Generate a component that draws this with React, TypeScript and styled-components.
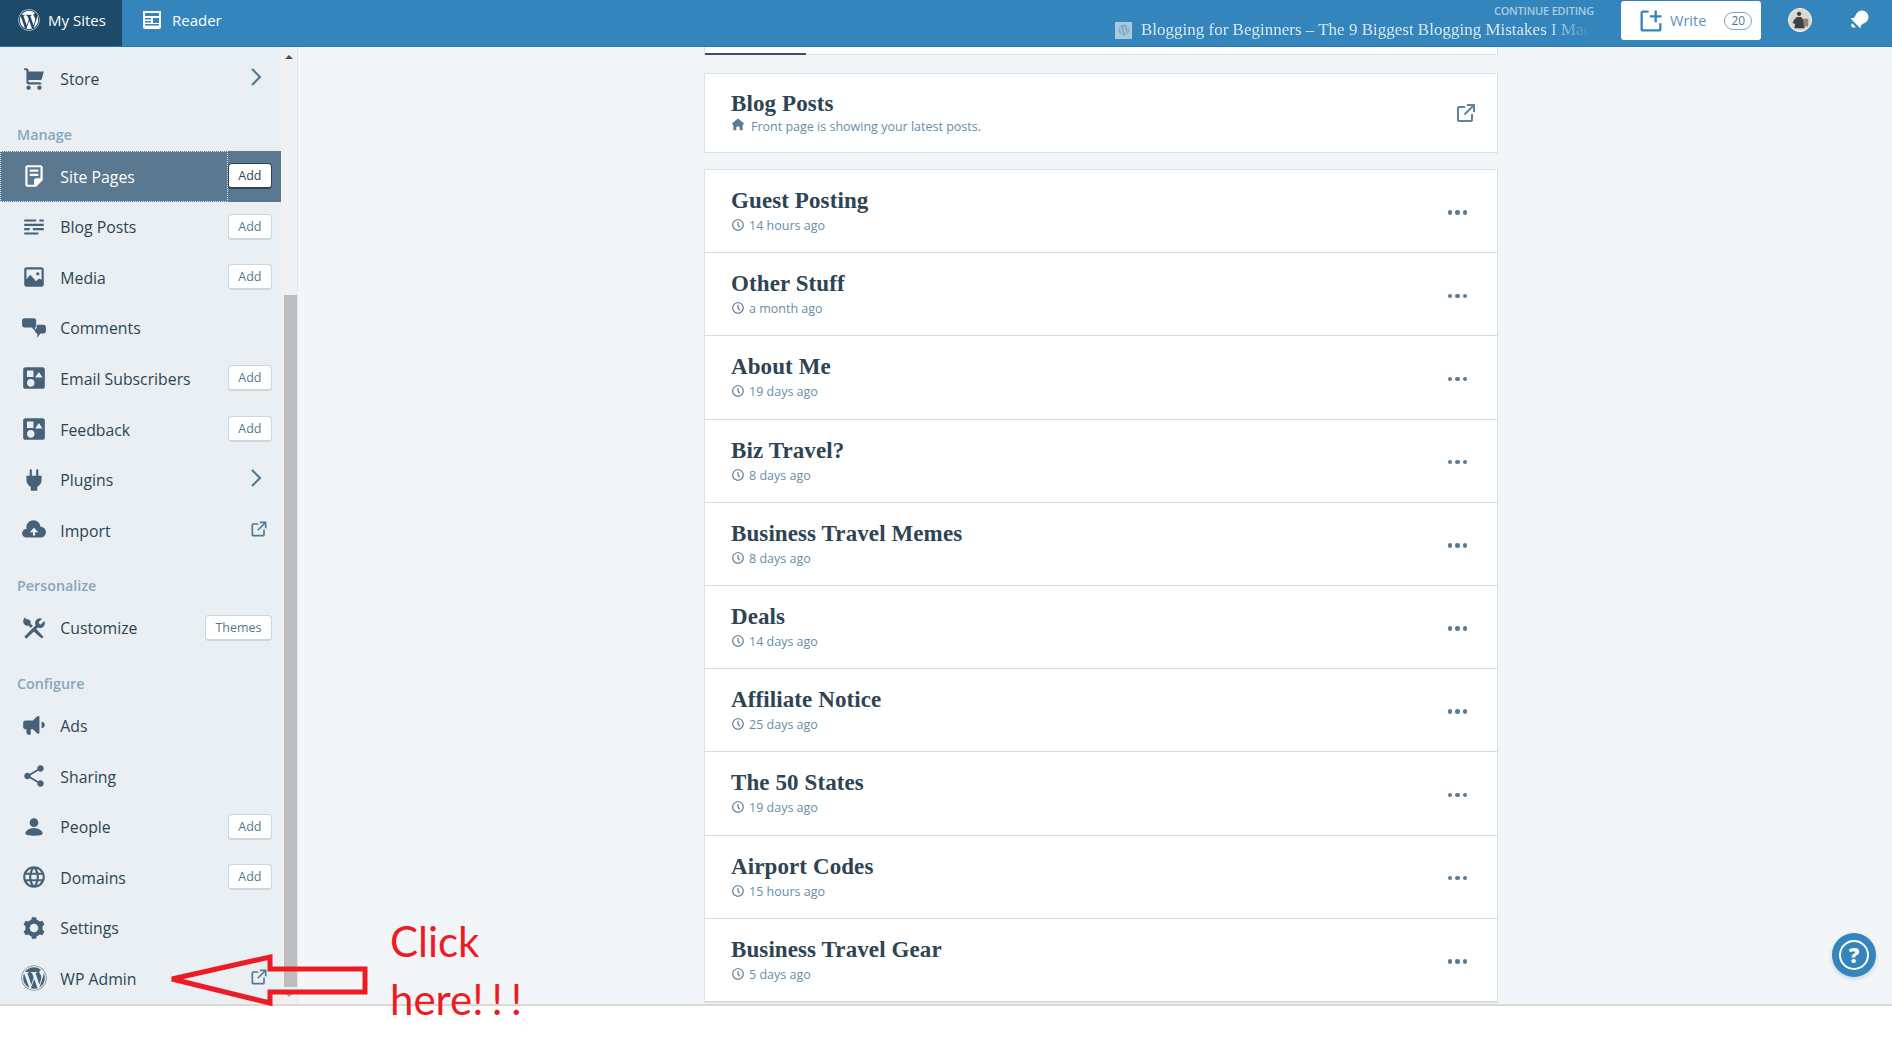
import React from "react";
import styled, { createGlobalStyle } from "styled-components";
import { FaWordpress } from "react-icons/fa";
import { MdLanguage } from "react-icons/md";

const GlobalStyle = createGlobalStyle`
    html, body {
        margin: 0;
        padding: 0;
        background: #fff;
    }
    body {
        width: 1892px;
        height: 1058px;
        overflow: hidden;
        font-family: "Open Sans", "Noto Sans", sans-serif;
    }
`;

const palette = {
    blue: "#3385bb",
    navy: "#1d4a68",
    ink: "#2e4453",
    steel: "#537994",
    muted: "#87a6bc",
    line: "#d8e2e9",
};

const ICONS: Record<string, string> = {
    cart: "M9 20c0 1.1-.9 2-2 2s-1.99-.9-1.99-2S5.9 18 7 18s2 .9 2 2zm8-2c-1.1 0-1.99.9-1.99 2s.89 2 1.99 2 2-.9 2-2-.9-2-2-2zm.396-5c.937 0 1.75-.65 1.952-1.566L21 5H7V4c0-1.105-.895-2-2-2H3v2h2v11c0 1.105.895 2 2 2h12c0-1.105-.895-2-2-2H7v-2h10.396z",
    pages: "M16 8H8V6h8v2zm0 2H8v2h8v-2zm4-6v12l-6 6H6c-1.105 0-2-.895-2-2V4c0-1.105.895-2 2-2h12c1.105 0 2 .895 2 2zm-2 10V4H6v16h6v-4c0-1.105.895-2 2-2h4z",
    posts: "M16 19H3v-2h13v2zm5-10H3v2h18V9zM3 5v2h11V5H3zm14 0v2h4V5h-4zm-6 8v2h10v-2H11zm-8 0v2h5v-2H3z",
    media: "M21 5v14c0 1.105-.895 2-2 2H5c-1.105 0-2-.895-2-2V5c0-1.105.895-2 2-2h14c1.105 0 2 .895 2 2zm-2 0H5v9l3.500-4 5.500 6 1.500-1.700c.8-.9 2.200-.9 3 0l.5.600V5zm-5 4c0-.83.67-1.500 1.500-1.500S17 8.170 17 9s-.67 1.500-1.500 1.500S14 9.830 14 9z",
    comments: "M3 3h9c1.100 0 2 .9 2 2v5c0 .8-.4 1.300-1 1.700V15l-3-3.500H3c-1.100 0-2-.9-2-2V5c0-1.100.9-2 2-2zm13 6h5c1.100 0 2 .9 2 2v4c0 1.100-.9 2-2 2h-3l-3 4v-4c-1.100 0-2-.900-2-2v-1.500c.9-.5 1.500-1.500 1.500-2.500V10c0-.6.6-1 1.500-1z",
    types: "M4 2h16c1.100 0 2 .9 2 2v16c0 1.100-.9 2-2 2H4c-1.100 0-2-.9-2-2V4c0-1.100.9-2 2-2zm1.500 3v6h6V5h-6zm11 1.500L13 11.500h7L16.500 6.500zM9 13c-1.930 0-3.500 1.570-3.500 3.500S7.070 20 9 20s3.500-1.570 3.500-3.500S10.930 13 9 13z",
    plugins: "M16 8V3c0-.552-.448-1-1-1s-1 .448-1 1v5h-4V3c0-.552-.448-1-1-1s-1 .448-1 1v5H5v4c0 2.79 1.637 5.193 4 6.317V22h6v-3.683c2.363-1.124 4-3.527 4-6.317V8h-3z",
    cloud: "M18 9c-.01 0-.017.002-.025.003C17.72 5.646 14.922 3 11.500 3 7.910 3 5 5.910 5 9.500c0 .524.070 1.030.186 1.520C5.123 11.015 5.064 11 5 11c-2.210 0-4 1.790-4 4 0 2.210 1.790 4 4 4h13c2.760 0 5-2.240 5-5s-2.240-5-5-5zm-5 5v3h-2v-3H8l4-4 4 4h-3z",
    customize: "M2 6c0-1.505.78-3.08 2-4 0 .845.69 2 2 2 1.657 0 3 1.343 3 3 0 .386-.08.752-.212 1.09.74.594 1.476 1.19 2.19 1.81L8.9 11.98c-.62-.716-1.214-1.454-1.807-2.192C6.753 9.92 6.387 10 6 10c-2.21 0-4-1.79-4-4zm12.152 6.848l1.34-1.34c.607.304 1.283.492 2.008.492 2.485 0 4.5-2.015 4.5-4.5 0-.725-.188-1.4-.493-2.007L18 9l-2-2 3.507-3.507C18.9 3.188 18.225 3 17.5 3 15.015 3 13 5.015 13 7.5c0 .725.188 1.4.493 2.007L3 20l2 2 6.848-6.848c1.885 1.928 3.874 3.753 5.977 5.45l1.425 1.148 1.5-1.5-1.15-1.425c-1.695-2.103-3.52-4.092-5.448-5.977z",
    speaker: "M19 8v6c1.7 0 3-1.3 3-3s-1.3-3-3-3zM11 7H4c-1.1 0-2 .9-2 2v4c0 1.1.9 2 2 2h1v3c0 1.1.9 2 2 2h2v-5h2l4 4h2V3h-2l-4 4z",
    share: "M18 16c-.788 0-1.5.31-2.034.807L8.91 12.7c.05-.23.09-.46.09-.7s-.04-.47-.09-.7l7.05-4.11c.54.5 1.25.81 2.04.81 1.66 0 3-1.34 3-3s-1.34-3-3-3-3 1.34-3 3c0 .24.04.47.09.7L8.04 9.81C7.5 9.31 6.79 9 6 9c-1.66 0-3 1.34-3 3s1.34 3 3 3c.79 0 1.5-.31 2.04-.81l7.05 4.12c-.05.22-.09.45-.09.69 0 1.66 1.34 3 3 3s3-1.34 3-3-1.34-3-3-3z",
    user: "M12 4c2.21 0 4 1.79 4 4s-1.79 4-4 4-4-1.79-4-4 1.79-4 4-4zm0 16s8 0 8-2c0-2.4-3.9-5-8-5s-8 2.6-8 5c0 2 8 2 8 2z",
    cog: "M20 12c0-.568-.06-1.122-.174-1.656l1.834-1.612-2-3.464-2.322.786c-.82-.736-1.787-1.308-2.86-1.657L14 2h-4l-.48 2.396c-1.07.35-2.04.92-2.858 1.657L4.34 5.268l-2 3.464 1.834 1.612C4.06 10.878 4 11.432 4 12s.06 1.122.174 1.656L2.34 15.268l2 3.464 2.322-.786c.82.736 1.787 1.308 2.86 1.657L10 22h4l.48-2.396c1.07-.35 2.04-.92 2.858-1.657l2.322.786 2-3.464-1.834-1.613c.113-.535.174-1.09.174-1.657zm-8 4c-2.21 0-4-1.79-4-4s1.79-4 4-4 4 1.79 4 4-1.79 4-4 4z",
    external: "M19 13v6c0 1.105-.895 2-2 2H5c-1.105 0-2-.895-2-2V7c0-1.105.895-2 2-2h6v2H5v12h12v-6h2zM13 3v2h4.586l-7.793 7.793 1.414 1.414L19 6.414V11h2V3h-8z",
    chevron: "M10 20l8-8-8-8-1.414 1.414L15.172 12l-6.586 6.586",
    house: "M22 9L12 1 2 9v2h2v10h5v-4c0-1.657 1.343-3 3-3s3 1.343 3 3v4h5V11h2V9z",
    time: "M12 4c4.41 0 8 3.59 8 8s-3.59 8-8 8-8-3.59-8-8 3.59-8 8-8m0-2C6.477 2 2 6.477 2 12s4.477 10 10 10 10-4.477 10-10S17.523 2 12 2zm3.8 13.4L13 11.667V7h-2v5.333l3.2 4.266 1.6-1.2z",
    reader: "M3 3h18v16c0 1.105-.895 2-2 2H5c-1.105 0-2-.895-2-2V3zm2 2v3h14V5H5zm0 5v1.500h6V10H5zm8 0v5h6v-5h-6zm-8 3v1.500h6V13H5zm0 3v1.500h14V16H5z",
    create: "M21 14v5c0 1.105-.895 2-2 2H5c-1.105 0-2-.895-2-2V5c0-1.105.895-2 2-2h5v2H5v14h14v-5h2zM21 7h-4V3h-2v4h-4v2h4v4h2V9h4V7z",
    bell: "M3.500 10.500C6.500 10.500 7.500 9.500 8.500 7.500 9.500 4.500 12 2.500 15 2.500c3.500 0 6.500 3 6.500 6.500 0 3-2 5.500-5 6.500-2 1-3 2-3 5L3.500 10.500zM5 15.200l3.800 3.800c-1 1-2.800 1-3.800 0s-1-2.800 0-3.800z",
};

const Glyph = styled.svg<{ $size: number; $color?: string }>`
    display: block;
    flex: none;
    width: ${(p) => p.$size}px;
    height: ${(p) => p.$size}px;
    fill: ${(p) => p.$color || "currentColor"};
`;

interface IconProps {
    name: string;
    size?: number;
    color?: string;
}

const Icon: React.FC<IconProps> = ({ name, size = 26, color }) => (
    <Glyph viewBox="0 0 24 24" $size={size} $color={color} fillRule="evenodd">
        <path d={ICONS[name]} />
    </Glyph>
);

const Page = styled.div`
    position: relative;
    width: 1892px;
    height: 1058px;
    overflow: hidden;
`;

const Frame = styled.div`
    height: 1004px;
    display: flex;
    flex-direction: column;
    border-bottom: 2px solid #dcd8d3;
`;

/* ---- masthead ---- */

const Masthead = styled.header`
    flex: none;
    height: 46px;
    display: flex;
    align-items: stretch;
    background: ${palette.blue};
    border-bottom: 1px solid #2f76a6;
    color: #fff;
`;

const MastTab = styled.div<{ $active?: boolean; $width: number }>`
    width: ${(p) => p.$width}px;
    display: flex;
    align-items: center;
    gap: 8px;
    padding: 0 0 6px 18px;
    box-sizing: border-box;
    font-size: 15px;
    background: ${(p) => (p.$active ? palette.navy : "transparent")};
`;

const DraftBlock = styled.div`
    margin-left: auto;
    width: 480px;
    height: 46px;
    display: flex;
    flex-direction: column;
    align-items: flex-end;
    box-sizing: border-box;
    padding-top: 4px;
`;

const DraftLabel = styled.div`
    font-size: 11px;
    line-height: 14px;
    letter-spacing: -0.2px;
    text-transform: uppercase;
    font-weight: 600;
    color: #a9cde4;
`;

const DraftTitle = styled.div`
    width: 476px;
    margin-right: 3px;
    display: flex;
    align-items: center;
    gap: 9px;
    line-height: 24px;
`;

const SiteThumb = styled.div`
    flex: none;
    width: 17px;
    height: 17px;
    background: #a9c9de;
    display: flex;
    align-items: center;
    justify-content: center;
    color: #7ea5c0;
`;

const DraftText = styled.div`
    flex: 1;
    min-width: 0;
    white-space: nowrap;
    overflow: hidden;
    font-family: "Liberation Serif", serif;
    font-size: 17px;
    color: #d7e7f2;
    -webkit-mask-image: linear-gradient(to right, #000 90%, transparent 100%);
    mask-image: linear-gradient(to right, #000 90%, transparent 100%);
`;

const WriteButton = styled.div`
    flex: none;
    align-self: flex-start;
    margin: 1px 0 0 27px;
    width: 140px;
    height: 39px;
    box-sizing: border-box;
    background: #fff;
    border-radius: 3px;
    display: flex;
    align-items: center;
    padding-left: 16px;
    color: ${palette.blue};
    font-size: 14.5px;
`;

const WriteLabel = styled.span`
    margin-left: 5px;
    color: #5a93bc;
`;

const Badge = styled.span`
    margin-left: 18px;
    width: 28px;
    height: 18px;
    box-sizing: border-box;
    border: 1px solid #87a6bc;
    border-radius: 9px;
    font-size: 12px;
    line-height: 16px;
    text-align: center;
    color: #537994;
`;

const MastIcons = styled.div`
    width: 131px;
    display: flex;
    align-items: center;
    padding-left: 27px;
    gap: 35px;
    box-sizing: border-box;
    height: 40px;
`;

const Avatar = styled.div`
    flex: none;
    width: 24px;
    height: 24px;
    box-sizing: border-box;
    border: 1.5px solid #fff;
    border-radius: 50%;
    overflow: hidden;
    background: #d8d4cd;
`;

/* ---- sidebar ---- */

const Body = styled.div`
    flex: 1;
    min-height: 0;
    display: flex;
    background: #f3f6f8;
`;

const Sidebar = styled.aside`
    flex: none;
    width: 281px;
    overflow: hidden;
    background: #e9eff3;
    padding-top: 6.3px;
    box-sizing: border-box;
`;

const SectionTitle = styled.h2`
    margin: 0;
    height: 47.2px;
    padding: 7px 0 0 17px;
    box-sizing: border-box;
    font-size: 14.3px;
    line-height: 47.2px;
    font-weight: 600;
    color: ${palette.muted};
`;

const Row = styled.div<{ $selected?: boolean }>`
    height: 50.55px;
    display: flex;
    align-items: center;
    padding-right: 9px;
    box-sizing: border-box;
    color: ${(p) => (p.$selected ? "#fff" : palette.ink)};
    background: ${(p) => (p.$selected ? "#5a7890" : "transparent")};
`;

const RowLink = styled.div<{ $selected?: boolean }>`
    flex: 1;
    min-width: 0;
    height: 100%;
    display: flex;
    align-items: center;
    gap: 13.3px;
    padding: 1px 0 0 21px;
    box-sizing: border-box;
    font-size: 15.8px;
    ${(p) => p.$selected && "outline: 1px dotted rgba(255,255,255,.8); outline-offset: -1px;"}
`;

const RowIcon = styled.span<{ $selected?: boolean }>`
    display: flex;
    margin-top: -1px;
    color: ${(p) => (p.$selected ? "#fff" : "#476178")};
`;

const SideAction = styled.div<{ $selected?: boolean }>`
    flex: none;
    height: 26px;
    padding: 0 9.5px;
    box-sizing: border-box;
    display: flex;
    align-items: center;
    background: #fff;
    border: 1px solid ${(p) => (p.$selected ? palette.ink : "#c8d7e1")};
    border-bottom-width: 2px;
    border-radius: 4px;
    font-size: 12.5px;
    color: ${(p) => (p.$selected ? palette.ink : palette.steel)};
`;

const RowTail = styled.span<{ $wide?: boolean }>`
    flex: none;
    display: flex;
    margin-top: -3px;
    margin-right: ${(p) => (p.$wide ? 4 : 3)}px;
    color: ${palette.steel};
`;

const Scrollbar = styled.div`
    flex: none;
    width: 17px;
    background: #f1f1f1;
    border-right: 1px solid #dfe7ec;
    box-sizing: border-box;
    display: flex;
    flex-direction: column;
    align-items: center;
`;

const ScrollUp = styled.div`
    margin-top: 8px;
    width: 0;
    height: 0;
    border-left: 4px solid transparent;
    border-right: 4px solid transparent;
    border-bottom: 4px solid #505050;
`;

const ScrollThumb = styled.div`
    margin: 236px 0 0 3px;
    width: 13px;
    height: 692px;
    background: #bdbdbd;
`;

const ScrollDown = styled.div`
    margin-top: 6px;
    width: 0;
    height: 0;
    border-left: 4px solid transparent;
    border-right: 4px solid transparent;
    border-top: 4px solid #a3a3a3;
`;

/* ---- content ---- */

const Main = styled.main`
    flex: 1;
    min-width: 0;
    overflow: hidden;
    padding: 0 394px 0 406px;
`;

const TabStrip = styled.div`
    height: 8px;
    padding-top: 6px;
    box-sizing: border-box;
    background: #fff;
    border: 1px solid ${palette.line};
    border-top: none;
    margin-bottom: 18px;
`;

const TabMark = styled.div`
    width: 101px;
    height: 2px;
    background: #3d4f60;
`;

const Card = styled.section`
    background: #fff;
    border: 1px solid ${palette.line};
    margin-bottom: 16px;
`;

const ListRow = styled.div<{ $tall?: boolean }>`
    height: ${(p) => (p.$tall ? 78 : 82.2)}px;
    display: flex;
    align-items: center;
    justify-content: space-between;
    padding: 0 21px 0 26px;
    border-bottom: ${(p) => (p.$tall ? "none" : `1px solid #cfdde8`)};
`;

const RowText = styled.div`
    display: flex;
    flex-direction: column;
    margin-top: 1px;
`;

const PageTitle = styled.div`
    font-family: "Liberation Serif", serif;
    font-weight: 700;
    font-size: 23px;
    line-height: 26px;
    letter-spacing: 0.1px;
    color: #2e4453;
`;

const Meta = styled.div<{ $gap: number; $top: number }>`
    display: flex;
    align-items: center;
    gap: ${(p) => p.$gap}px;
    margin-top: ${(p) => p.$top}px;
    font-size: 12.5px;
    line-height: 18px;
    color: #668eaa;
`;

const MetaIcon = styled.span<{ $up?: boolean }>`
    display: flex;
    color: #5b7a94;
    margin-top: ${(p) => (p.$up ? -4 : -2)}px;
`;

const Dots = styled.div`
    display: flex;
    gap: 3px;
    margin: 3px 9px 0 0;
`;

const Dot = styled.span`
    width: 4.5px;
    height: 4.5px;
    border-radius: 50%;
    background: #5b7a94;
`;

const OpenLink = styled.span`
    display: flex;
    color: #5f83a0;
    margin-right: -2px;
`;

/* ---- overlays ---- */

const HelpButton = styled.div`
    position: absolute;
    left: 1832px;
    top: 933px;
    width: 44px;
    height: 44px;
    box-sizing: border-box;
    border-radius: 50%;
    background: ${palette.blue};
    padding: 7px;
    box-shadow: 0 2px 4px rgba(135, 166, 188, 0.4);
`;

const HelpRing = styled.div`
    width: 100%;
    height: 100%;
    box-sizing: border-box;
    border-radius: 50%;
    border: 2.5px solid #fff;
    display: flex;
    align-items: center;
    justify-content: center;
    color: #fff;
    font-family: "Open Sans", sans-serif;
    font-weight: 800;
    font-size: 21px;
    line-height: 1;
`;

const Arrow = styled.svg`
    position: absolute;
    left: 165px;
    top: 948px;
    width: 210px;
    height: 64px;
`;

const ClickNote = styled.div`
    position: absolute;
    left: 390px;
    top: 912px;
    width: 160px;
    font-family: Lato, "Liberation Sans", sans-serif;
    font-size: 42px;
    line-height: 58px;
    color: #ed1c24;
`;

const Shout = styled.span`
    letter-spacing: 8px;
`;

const PAGES = [
    { title: "Guest Posting", when: "14 hours ago" },
    { title: "Other Stuff", when: "a month ago" },
    { title: "About Me", when: "19 days ago" },
    { title: "Biz Travel?", when: "8 days ago" },
    { title: "Business Travel Memes", when: "8 days ago" },
    { title: "Deals", when: "14 days ago" },
    { title: "Affiliate Notice", when: "25 days ago" },
    { title: "The 50 States", when: "19 days ago" },
    { title: "Airport Codes", when: "15 hours ago" },
    { title: "Business Travel Gear", when: "5 days ago" },
];

type Tail = "chevron" | "external";

interface SideRowProps {
    icon?: string;
    label: string;
    action?: string;
    tail?: Tail;
    selected?: boolean;
    customIcon?: React.ReactNode;
}

const SideRow: React.FC<SideRowProps> = ({ icon, label, action, tail, selected, customIcon }) => (
    <Row $selected={selected}>
        <RowLink $selected={selected}>
            <RowIcon $selected={selected}>{customIcon || <Icon name={icon!} />}</RowIcon>
            {label}
        </RowLink>
        {action && <SideAction $selected={selected}>{action}</SideAction>}
        {tail && (
            <RowTail $wide={tail === "chevron"}>
                <Icon name={tail} size={tail === "chevron" ? 26 : 20} />
            </RowTail>
        )}
    </Row>
);

const App: React.FC = () => {
    return (
        <Page>
            <GlobalStyle />
            <Frame>
                <Masthead>
                    <MastTab $active $width={122}>
                        <FaWordpress size={22} />
                        My Sites
                    </MastTab>
                    <MastTab $width={130}>
                        <Icon name="reader" size={24} />
                        Reader
                    </MastTab>
                    <DraftBlock>
                        <DraftLabel>Continue Editing</DraftLabel>
                        <DraftTitle>
                            <SiteThumb>
                                <FaWordpress size={12} />
                            </SiteThumb>
                            <DraftText>Blogging for Beginners – The 9 Biggest Blogging Mistakes I Made</DraftText>
                        </DraftTitle>
                    </DraftBlock>
                    <WriteButton>
                        <Icon name="create" size={28} color="#3385bb" />
                        <WriteLabel>Write</WriteLabel>
                        <Badge>20</Badge>
                    </WriteButton>
                    <MastIcons>
                        <Avatar>
                            <svg viewBox="0 0 24 24" width="21" height="21">
                                <rect width="24" height="24" fill="#dcd7cf" />
                                <path d="M9 5.500c0-1.400 1-2.500 2.500-2.500S14 4.100 14 5.500 13 8 11.500 8 9 6.900 9 5.500zM6 12l3-3h5l3 4 1 9H6l1-5-3-1 2-4z" fill="#3a4148" />
                                <path d="M16 11h6v9h-5z" fill="#8d8377" />
                            </svg>
                        </Avatar>
                        <Icon name="bell" size={24} color="#fff" />
                    </MastIcons>
                </Masthead>
                <Body>
                    <Sidebar>
                        <SideRow icon="cart" label="Store" tail="chevron" />
                        <SectionTitle>Manage</SectionTitle>
                        <SideRow icon="pages" label="Site Pages" action="Add" selected />
                        <SideRow icon="posts" label="Blog Posts" action="Add" />
                        <SideRow icon="media" label="Media" action="Add" />
                        <SideRow icon="comments" label="Comments" />
                        <SideRow icon="types" label="Email Subscribers" action="Add" />
                        <SideRow icon="types" label="Feedback" action="Add" />
                        <SideRow icon="plugins" label="Plugins" tail="chevron" />
                        <SideRow icon="cloud" label="Import" tail="external" />
                        <SectionTitle>Personalize</SectionTitle>
                        <SideRow icon="customize" label="Customize" action="Themes" />
                        <SectionTitle>Configure</SectionTitle>
                        <SideRow icon="speaker" label="Ads" />
                        <SideRow icon="share" label="Sharing" />
                        <SideRow icon="user" label="People" action="Add" />
                        <SideRow customIcon={<MdLanguage size={26} />} label="Domains" action="Add" />
                        <SideRow icon="cog" label="Settings" />
                        <SideRow customIcon={<FaWordpress size={26} />} label="WP Admin" tail="external" />
                    </Sidebar>
                    <Scrollbar>
                        <ScrollUp />
                        <ScrollThumb />
                        <ScrollDown />
                    </Scrollbar>
                    <Main>
                        <TabStrip>
                            <TabMark />
                        </TabStrip>
                        <Card>
                            <ListRow $tall>
                                <RowText>
                                    <PageTitle>Blog Posts</PageTitle>
                                    <Meta $gap={6} $top={1}>
                                        <MetaIcon $up>
                                            <Icon name="house" size={14} />
                                        </MetaIcon>
                                        Front page is showing your latest posts.
                                    </Meta>
                                </RowText>
                                <OpenLink>
                                    <Icon name="external" size={24} />
                                </OpenLink>
                            </ListRow>
                        </Card>
                        <Card>
                            {PAGES.map((page) => (
                                <ListRow key={page.title}>
                                    <RowText>
                                        <PageTitle>{page.title}</PageTitle>
                                        <Meta $gap={4} $top={3}>
                                            <MetaIcon>
                                                <Icon name="time" size={14} />
                                            </MetaIcon>
                                            {page.when}
                                        </Meta>
                                    </RowText>
                                    <Dots>
                                        <Dot />
                                        <Dot />
                                        <Dot />
                                    </Dots>
                                </ListRow>
                            ))}
                        </Card>
                    </Main>
                </Body>
            </Frame>
            <HelpButton>
                <HelpRing>?</HelpRing>
            </HelpButton>
            <Arrow viewBox="0 0 210 64">
                <polygon
                    points="7,31 105,9 105,21 200,21 200,44 105,44 105,55"
                    fill="none"
                    stroke="#ed1c24"
                    strokeWidth="5"
                />
            </Arrow>
            <ClickNote>
                Click
                <br />
                here<Shout>!!!</Shout>
            </ClickNote>
        </Page>
    );
};

export default App;
